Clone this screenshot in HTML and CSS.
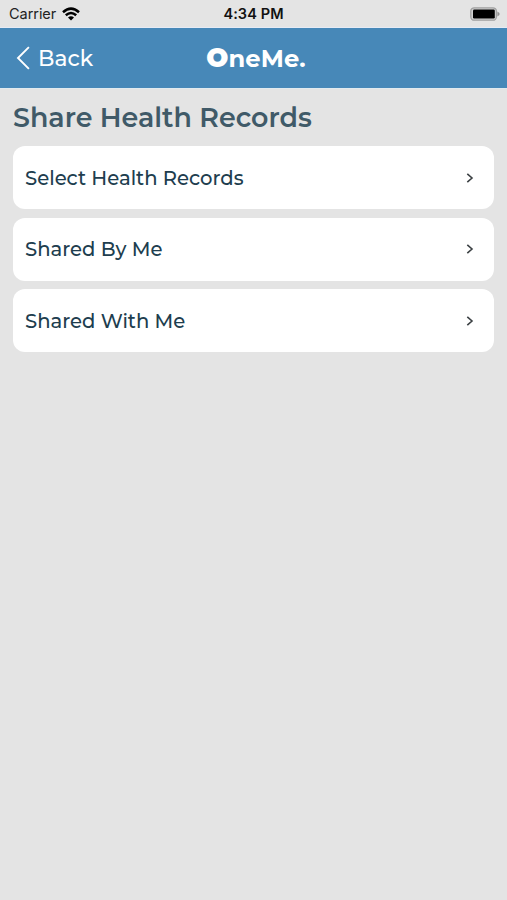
FILE: index.html
```html
<!DOCTYPE html>
<html lang="en">
<head>
<meta charset="utf-8">
<title>Share Health Records</title>
<link rel="stylesheet" href="styles.css">
</head>
<body>
<div class="status">
  <div class="carrier"><span>Carrier</span>
    <svg class="wifi" viewBox="0 0 18 14" width="18" height="14"><g fill="none" stroke="#000" stroke-width="2.5"><path d="M1 5.2Q9-2 17 5.2"/><path d="M3.8 8.3Q9 3.6 14.2 8.3"/></g><path d="M6 10.4Q9 8 12 10.4L9 13.5Z"/></svg>
  </div>
  <span class="time">4:34 PM</span>
  <svg class="battery" viewBox="0 0 30 14" width="30" height="14"><rect x=".8" y=".8" width="25.6" height="12.4" rx="3.5" fill="#d2d2d2" stroke="#a0a0a0" stroke-width="1.3"/><rect x="3" y="2.6" width="21.8" height="8.8" rx="1.2"/><path d="M27.4 4.4Q32 7 27.4 9.6Z" fill="#929292"/></svg>
</div>
<header class="nav">
  <div class="back"><svg viewBox="0 0 14 24" width="14" height="24"><path d="M12.9 1.2L2 12L12.9 22.8" fill="none" stroke="#fff" stroke-width="1.9"/></svg><span>Back</span></div>
  <div class="logo"><span class="logo-o">O</span><span>neMe.</span></div>
</header>
<main>
  <h1><span>Share Health Records</span></h1>
  <div class="list">
    <div class="row"><span>Select Health Records</span><svg viewBox="0 0 8 12" width="8" height="12"><path d="M1.3 1.8L6 6L1.3 10.2"/></svg></div>
    <div class="row"><span>Shared By Me</span><svg viewBox="0 0 8 12" width="8" height="12"><path d="M1.3 1.8L6 6L1.3 10.2"/></svg></div>
    <div class="row"><span>Shared With Me</span><svg viewBox="0 0 8 12" width="8" height="12"><path d="M1.3 1.8L6 6L1.3 10.2"/></svg></div>
  </div>
</main>
</body>
</html>
```
FILE: styles.css
```css
* { box-sizing: border-box; }
body { margin: 0; min-height: 900px; background: #e4e4e4; font-family: Montserrat, Inter, sans-serif; }
svg { display: block; flex: none; }
span { white-space: nowrap; }
.status { height: 28px; padding: 0 7px 1px 9px; display: grid; grid-template-columns: 1fr auto 1fr; align-items: center; font: 14.5px/27px Inter, sans-serif; letter-spacing: -.05px; color: #222; border-bottom: 1px solid #e6ebf5; }
.carrier { display: flex; align-items: center; gap: 6px; }
.time { font-weight: 600; color: #111; margin-right: 2px; letter-spacing: .1px; }
.battery { justify-self: end; }
.nav { height: 61px; padding: 0 11px 0 16px; display: grid; grid-template-columns: 1fr auto 1fr; align-items: center; background: #4788b8; color: #fff; border-bottom: 1px solid #e1eaef; }
.back { display: flex; align-items: center; gap: 8px; font-size: 21.7px; font-weight: 500; }
.logo { display: flex; align-items: baseline; padding-top: 1px; font-size: 24.2px; font-weight: 700; line-height: 30px; letter-spacing: .1px; }
.logo-o { font-weight: 900; font-size: 26px; }
main { padding: 11px 13px; }
h1 { margin: 0 0 10px; font-size: 26.9px; line-height: 36px; font-weight: 600; color: #405a68; }
.list { display: flex; flex-direction: column; gap: 8.5px; }
.row { height: 63px; padding: .6px 20px 0 12px; display: flex; align-items: center; justify-content: space-between; background: #fff; border-radius: 12px; font-size: 19.6px; font-weight: 500; color: #203d4e; }
.row path { fill: none; stroke: #3c4144; stroke-width: 1.6; }
```
